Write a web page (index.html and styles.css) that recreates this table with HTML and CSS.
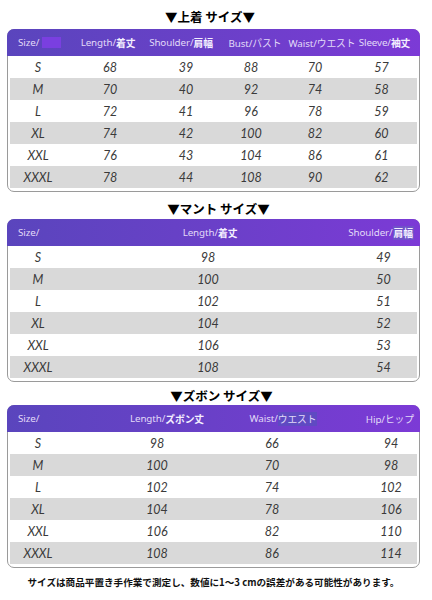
FILE: index.html
```html
<!DOCTYPE html>
<html lang="ja">
<head>
<meta charset="utf-8">
<link rel="stylesheet" href="styles.css">
</head>
<body>
<div class="page">
  <h2 class="title t1">▼上着 サイズ▼</h2>
  <div class="table tb1">
    <div class="head">
      <div class="hc left">Size/<span class="blk"></span></div>
      <div class="hc">Length/ <b>着丈</b></div>
      <div class="hc">Shoulder/<b>肩幅</b></div>
      <div class="hc">Bust/パスト</div>
      <div class="hc">Waist/ウエスト</div>
      <div class="hc">Sleeve/ <b>袖丈</b></div>
    </div>
    <div class="body">
      <div class="row"><span>S</span><span>68</span><span>39</span><span>88</span><span>70</span><span>57</span></div>
      <div class="row alt"><span>M</span><span>70</span><span>40</span><span>92</span><span>74</span><span>58</span></div>
      <div class="row"><span>L</span><span>72</span><span>41</span><span>96</span><span>78</span><span>59</span></div>
      <div class="row alt"><span>XL</span><span>74</span><span>42</span><span>100</span><span>82</span><span>60</span></div>
      <div class="row"><span>XXL</span><span>76</span><span>43</span><span>104</span><span>86</span><span>61</span></div>
      <div class="row alt"><span>XXXL</span><span>78</span><span>44</span><span>108</span><span>90</span><span>62</span></div>
    </div>
  </div>

  <h2 class="title t2">▼マント サイズ▼</h2>
  <div class="table tb2">
    <div class="head">
      <div class="hc left">Size/</div>
      <div class="hc">Length/ <b>着丈</b></div>
      <div class="hc right">Shoulder/ <b class="hl">肩幅</b></div>
    </div>
    <div class="body">
      <div class="row"><span>S</span><span>98</span><span>49</span></div>
      <div class="row alt"><span>M</span><span>100</span><span>50</span></div>
      <div class="row"><span>L</span><span>102</span><span>51</span></div>
      <div class="row alt"><span>XL</span><span>104</span><span>52</span></div>
      <div class="row"><span>XXL</span><span>106</span><span>53</span></div>
      <div class="row alt"><span>XXXL</span><span>108</span><span>54</span></div>
    </div>
  </div>

  <h2 class="title t3">▼ズボン サイズ▼</h2>
  <div class="table tb3">
    <div class="head">
      <div class="hc left">Size/</div>
      <div class="hc">Length/<b>ズボン丈</b></div>
      <div class="hc">Waist/<span class="hl2">ウエスト</span></div>
      <div class="hc right">Hip/ヒップ</div>
    </div>
    <div class="body">
      <div class="row"><span>S</span><span>98</span><span>66</span><span class="last">94</span></div>
      <div class="row alt"><span>M</span><span>100</span><span>70</span><span class="last">98</span></div>
      <div class="row"><span>L</span><span>102</span><span>74</span><span class="last">102</span></div>
      <div class="row alt"><span>XL</span><span>104</span><span>78</span><span class="last">106</span></div>
      <div class="row"><span>XXL</span><span>106</span><span>82</span><span class="last">110</span></div>
      <div class="row alt"><span>XXXL</span><span>108</span><span>86</span><span class="last">114</span></div>
    </div>
  </div>

  <p class="note">サイズは商品平置き手作業で測定し、数値に1～3 cmの誤差がある可能性があります。</p>
</div>
</body>
</html>
```

FILE: styles.css
```css
html, body {
  margin: 0;
  padding: 0;
  background: #ffffff;
}
.page {
  width: 413px;
  margin-left: 7px;
  font-family: "Noto Sans", "Noto Sans CJK JP", sans-serif;
}
.title {
  margin: 0;
  text-align: center;
  font-family: "Noto Sans CJK JP", sans-serif;
  font-weight: 700;
  font-size: 12.5px;
  line-height: 16px;
  color: #000;
}
.t1 { padding-top: 9px; height: 20px; margin-right: 7px; }
.t2 { padding-top: 9px; height: 18px; margin-left: 10px; }
.t3 { padding-top: 6px; height: 17px; margin-left: 16px; }

.table {
  border: 1px solid #9a9a9a;
  border-radius: 7px;
  background: #fff;
}
.head {
  display: grid;
  height: 27px;
  margin: -1px -1px 0 -1px;
  border-radius: 7px 7px 0 0;
  background: linear-gradient(90deg, #5a45bd 0%, #6a40c8 50%, #7c3ad6 100%);
  color: #e2daf8;
  font-size: 9.8px;
  letter-spacing: -0.1px;
  align-items: center;
}
.hc {
  display: flex;
  justify-content: center;
  align-items: center;
  white-space: nowrap;
  height: 27px;
}
.hc b {
  font-family: "Noto Sans CJK JP", sans-serif;
  font-weight: 700;
  color: #f4f0ff;
}
.hc.left {
  justify-content: flex-start;
  padding-left: 11px;
}
.hc.right {
  justify-content: flex-end;
  padding-right: 6px;
}
.blk {
  display: inline-block;
  width: 19px;
  height: 11px;
  margin-left: 3px;
  background: #7a3fe0;
}
.hl {
  background: #6f52c8;
  padding: 0 1px;
}
.hl2 {
  background: #5f4ac2;
}
.body {
  padding: 0 2px 3px 2px;
}
.row {
  display: grid;
  height: 22px;
  align-items: center;
  font-family: "Lato", sans-serif;
  font-style: italic;
  font-weight: 400;
  font-size: 12.5px;
  color: #3a3a3a;
}
.row span {
  display: flex;
  justify-content: center;
  white-space: nowrap;
}
.row.alt {
  background: #d9d9d9;
}

.tb1 .head { grid-template-columns: 62px 78px 68px 80px 54px 71px; }
.tb1 .row { grid-template-columns: 56px 88px 64px 66px 62px 71px; }

.tb2 .head { grid-template-columns: 62px 282px 69px; }
.tb2 .row { grid-template-columns: 56px 284px 67px; }

.tb3 .head { grid-template-columns: 62px 196px 36px 119px; }
.tb3 .row { grid-template-columns: 56px 182px 48px 67px 56px; }
.tb3 .row .last { grid-column: 5; }

.note {
  margin: 7px 0 0 0;
  text-align: center;
  font-family: "Noto Sans CJK JP", sans-serif;
  font-weight: 700;
  font-size: 9.6px;
  color: #111;
}
```
